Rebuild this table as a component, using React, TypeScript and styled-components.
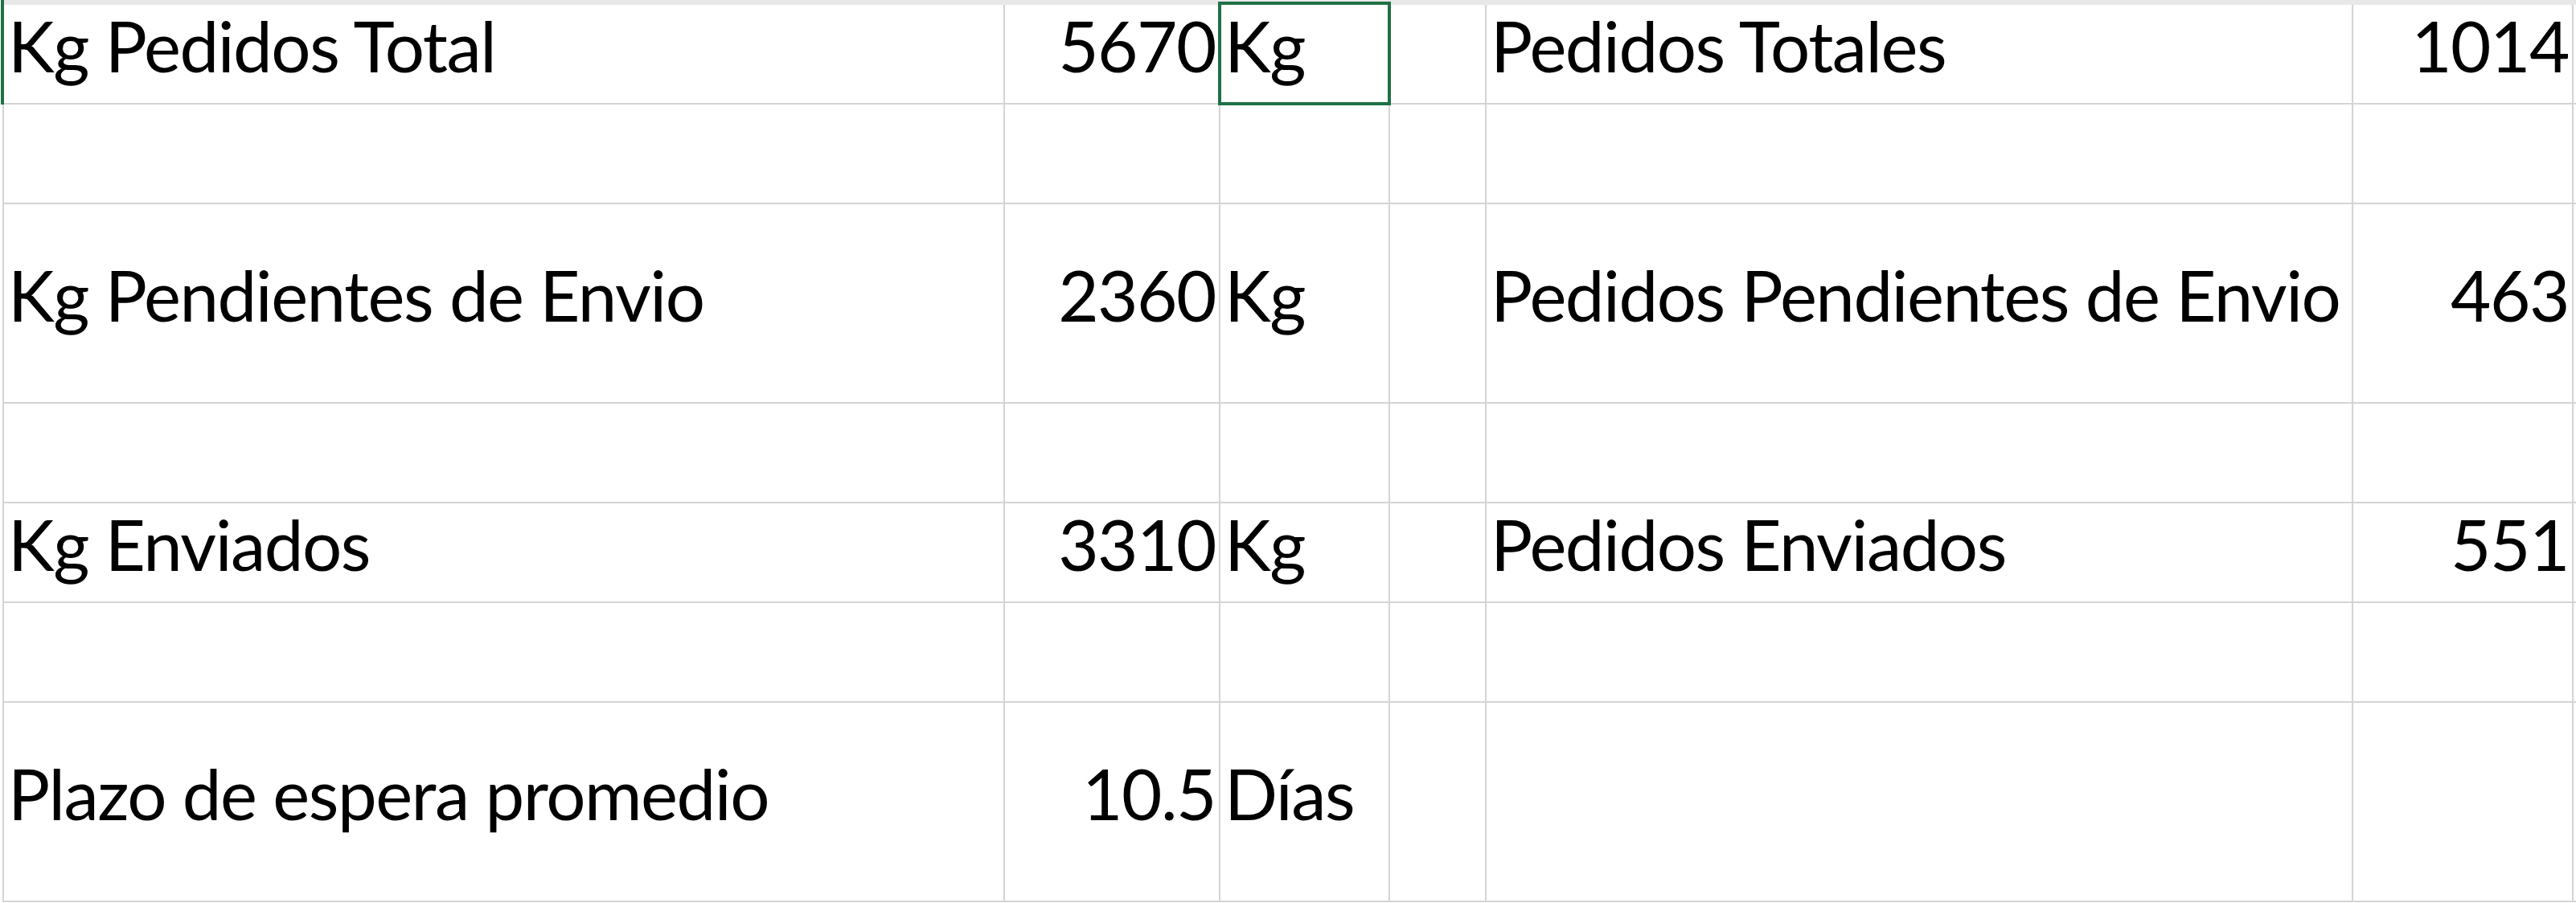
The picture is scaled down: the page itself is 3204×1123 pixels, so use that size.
import styled, { createGlobalStyle } from "styled-components";

const GlobalStyle = createGlobalStyle`
  html, body {
    margin: 0;
    padding: 0;
    background: #ffffff;
  }
`;

const GRID = "#d4d4d4";
const SELECT = "#1e7145";

const Sheet = styled.div`
  display: grid;
  grid-template-columns: 5px 1245px 268px 211px 120px 1078px 274px 1fr;
  grid-template-rows: 6px 124px 124px 248px 124px 124px 124px 248px;
  width: 100%;
  overflow: hidden;
  font-family: Lato, "Open Sans", sans-serif;
  color: #000;
`;

const HeaderEdge = styled.div<{ $active?: boolean }>`
  box-sizing: border-box;
  border-right: ${(p) => (p.$active ? `4px solid ${SELECT}` : `2px solid ${GRID}`)};
`;

const HeaderBand = styled.div`
  grid-column: 2 / -1;
  background: #e8e8e8;
`;

const RowEdge = styled.div<{ $active?: boolean }>`
  box-sizing: border-box;
  border-right: ${(p) => (p.$active ? `4px solid ${SELECT}` : `2px solid ${GRID}`)};
`;

const Cell = styled.div<{ $align?: "left" | "right" }>`
  position: relative;
  box-sizing: border-box;
  display: flex;
  align-items: center;
  justify-content: ${(p) => (p.$align === "right" ? "flex-end" : "flex-start")};
  padding: 0 4px 19px 5px;
  border-right: 2px solid ${GRID};
  border-bottom: 2px solid ${GRID};
  font-size: 87px;
  line-height: 1.2;
  letter-spacing: -1.5px;
  white-space: nowrap;
  overflow: visible;
`;

const Selection = styled.div`
  position: absolute;
  left: -3px;
  right: -3px;
  top: -4px;
  bottom: -3px;
  border: 4px solid ${SELECT};
  pointer-events: none;
  z-index: 2;
`;

interface RowData {
  label?: string;
  value?: string;
  unit?: string;
  label2?: string;
  value2?: string;
}

const rows: RowData[] = [
  { label: "Kg Pedidos Total", value: "5670", unit: "Kg", label2: "Pedidos Totales", value2: "1014" },
  {},
  { label: "Kg Pendientes de Envio", value: "2360", unit: "Kg", label2: "Pedidos Pendientes de Envio", value2: "463" },
  {},
  { label: "Kg Enviados", value: "3310", unit: "Kg", label2: "Pedidos Enviados", value2: "551" },
  {},
  { label: "Plazo de espera promedio", value: "10.5", unit: "Días" },
];

const Row = ({ data, selected }: { data: RowData; selected: boolean }) => (
  <>
    <RowEdge $active={selected} />
    <Cell>{data.label}</Cell>
    <Cell $align="right">{data.value}</Cell>
    <Cell>
      {data.unit}
      {selected && <Selection />}
    </Cell>
    <Cell />
    <Cell>{data.label2}</Cell>
    <Cell $align="right">{data.value2}</Cell>
    <Cell />
  </>
);

const App = () => {
  return (
    <>
      <GlobalStyle />
      <Sheet>
        <HeaderEdge $active />
        <HeaderBand />
        {rows.map((r, i) => (
          <Row key={i} data={r} selected={i === 0} />
        ))}
      </Sheet>
    </>
  );
};

export default App;
